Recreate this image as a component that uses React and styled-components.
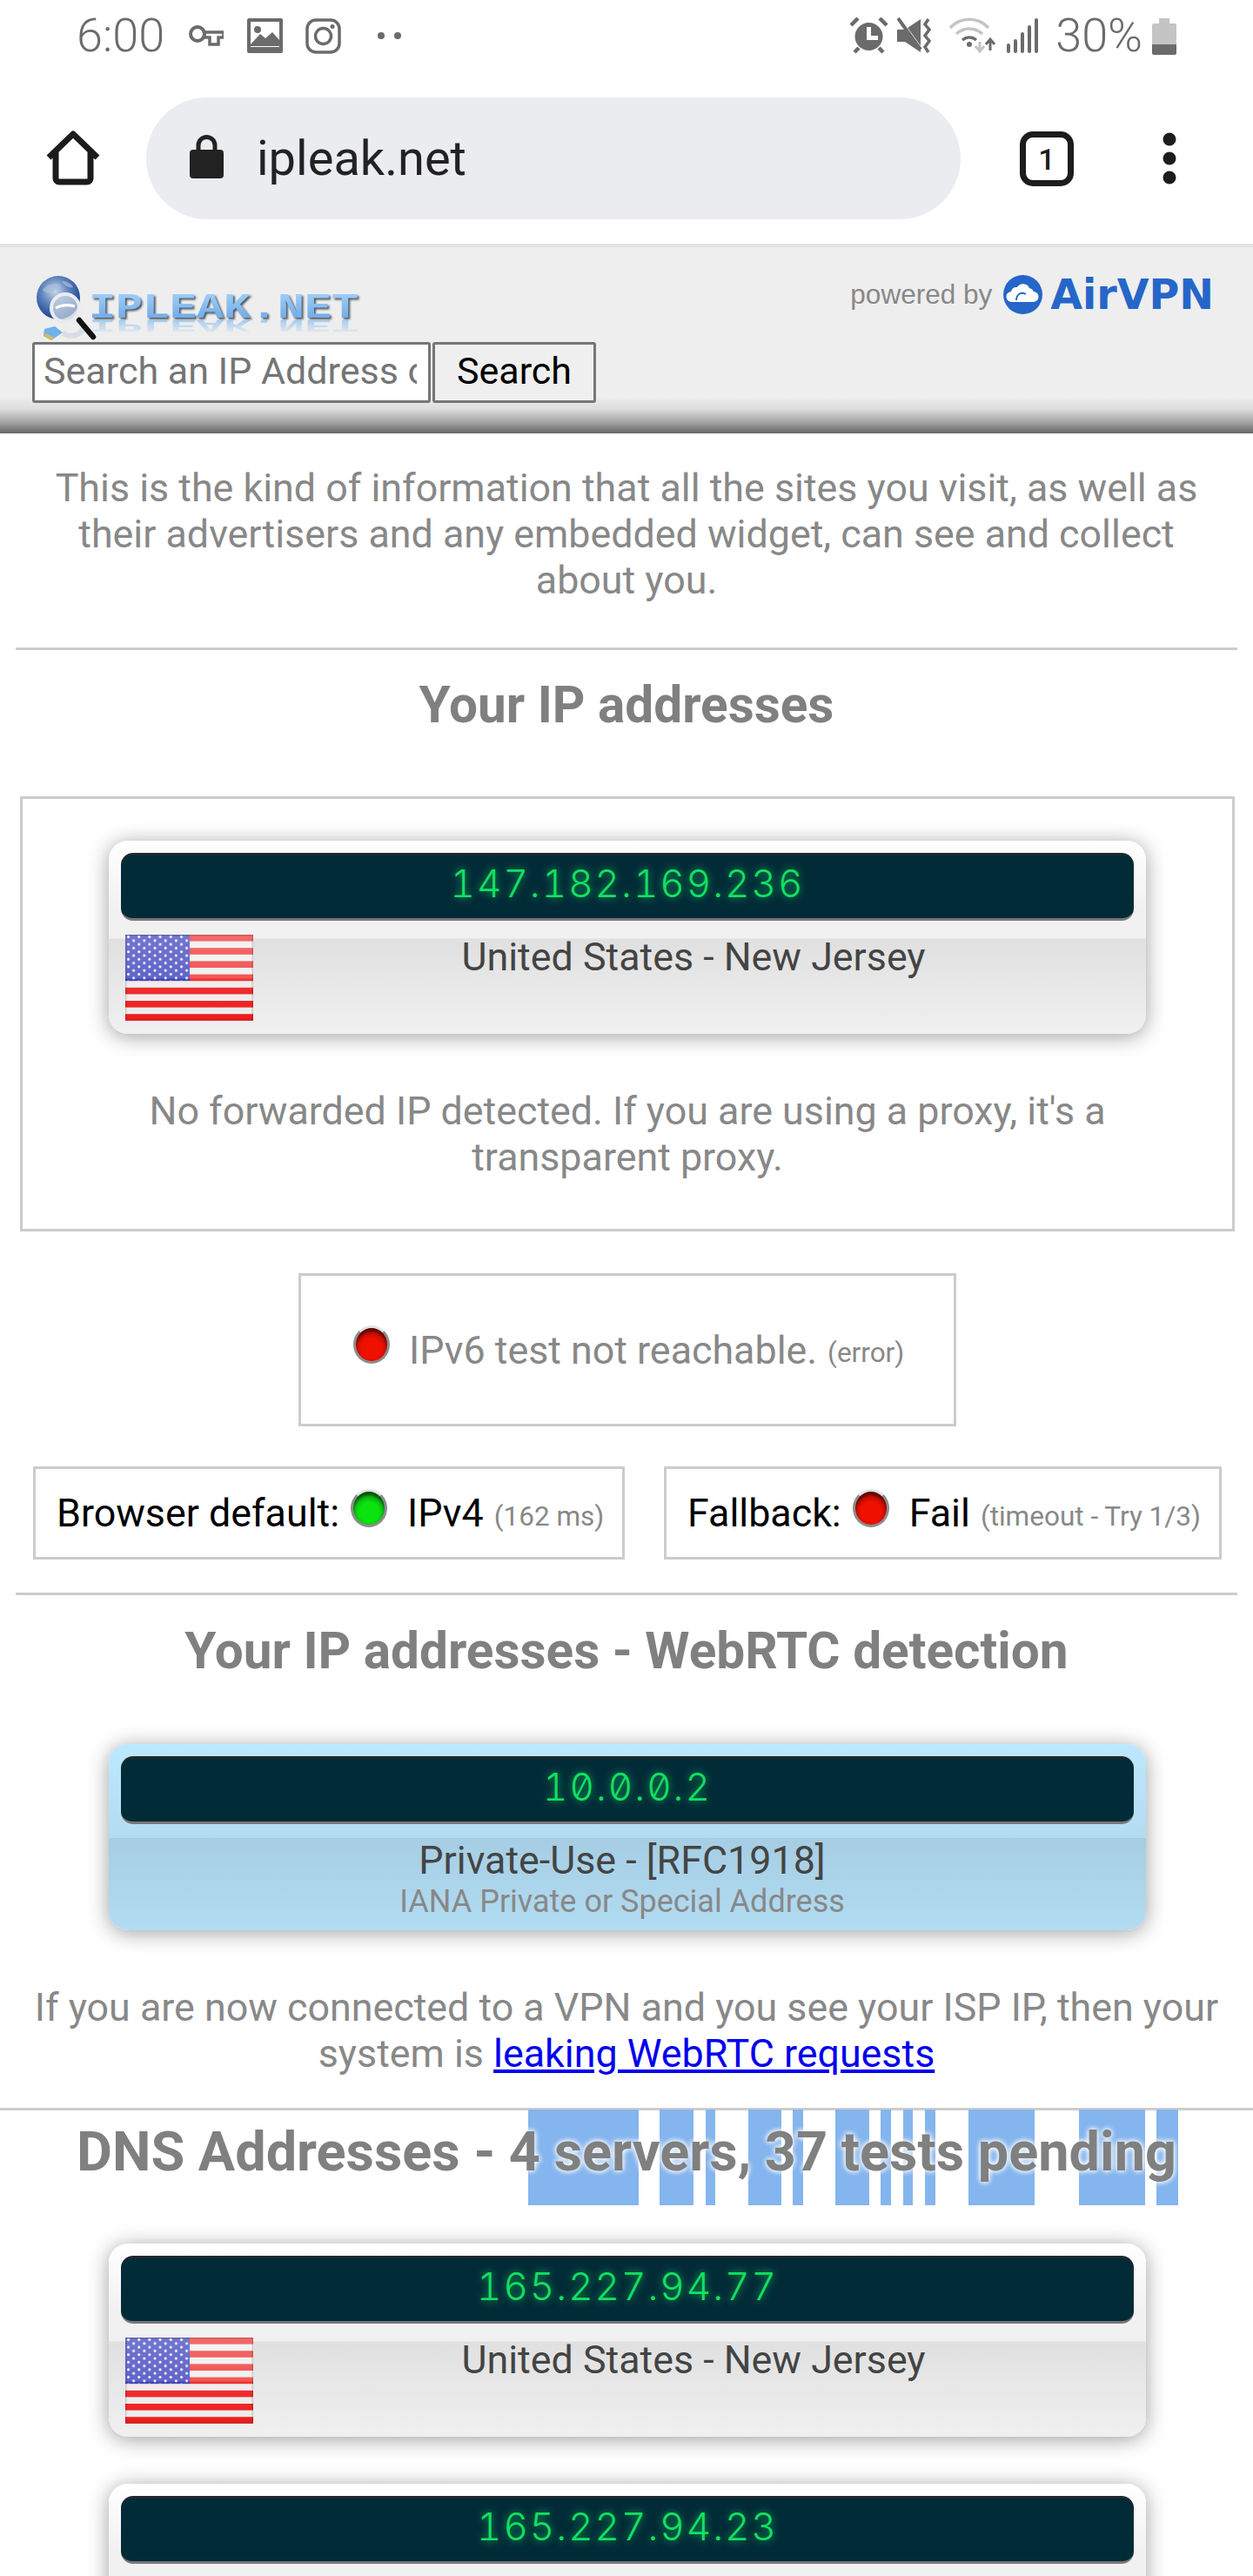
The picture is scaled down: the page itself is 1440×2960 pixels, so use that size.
import React from "react";
import styled, { createGlobalStyle } from "styled-components";

const GlobalStyle = createGlobalStyle`
  html, body {
    margin: 0;
    padding: 0;
    background: #fff;
  }
  body {
    font-family: Roboto, "Liberation Sans", sans-serif;
  }
`;

const Page = styled.div`
  width: 1440px;
  height: 2960px;
  overflow: hidden;
  background: #fff;
`;

/* android status bar */
const StatusBar = styled.div`
  height: 80px;
  display: flex;
  align-items: center;
  justify-content: space-between;
  padding: 2px 88px 0 88px;
  color: #6b6b6b;
  box-sizing: border-box;
`;

const StatusGroup = styled.div`
  display: flex;
  align-items: center;
`;

const StatusText = styled.span`
  font-size: 54px;
  font-weight: 300;
  line-height: 78px;
  margin-left: ${(p) => p.$gap || 0}px;
`;

const StatusIcon = styled.svg`
  display: block;
  flex: none;
  margin-left: ${(p) => p.$gap || 0}px;
`;

/* chrome toolbar */
const Toolbar = styled.div`
  height: 200px;
  display: flex;
  align-items: flex-start;
  position: relative;
`;

const HomeIcon = styled.svg`
  flex: none;
  margin: 70px 0 0 53px;
`;

const UrlPill = styled.div`
  width: 936px;
  height: 140px;
  margin: 32px 0 0 53px;
  border-radius: 70px;
  background: #ebecf0;
  display: flex;
  align-items: center;
  flex: none;
`;

const LockIcon = styled.svg`
  margin-left: 50px;
  margin-top: -4px;
  flex: none;
`;

const UrlText = styled.span`
  margin-left: 38px;
  font-size: 56px;
  color: #222;
`;

const TabCount = styled.div`
  flex: none;
  box-sizing: border-box;
  width: 62px;
  height: 63px;
  margin: 71px 0 0 68px;
  border: 7px solid #1c1c1c;
  border-radius: 15px;
  display: flex;
  align-items: center;
  justify-content: center;
  font-size: 34px;
  font-weight: 500;
  color: #1c1c1c;
`;

const MenuDots = styled.svg`
  flex: none;
  margin: 72px 0 0 102px;
`;

/* ipleak header */
const Header = styled.header`
  height: 218px;
  box-sizing: border-box;
  border-top: 4px solid #e2e4e2;
  background: linear-gradient(to bottom, #eeeeee 0, #eeeeee 172px, #dddddd 186px, #a0a0a0 202px, #666666 214px);
  display: flex;
  justify-content: space-between;
  padding: 29px 45px 0 37px;
`;

const Brand = styled.div`
  display: flex;
  flex-direction: column;
`;

const LogoSvg = styled.svg`
  display: block;
`;

const SearchForm = styled.form`
  display: flex;
  gap: 2px;
`;

const SearchInput = styled.input`
  box-sizing: border-box;
  width: 458px;
  height: 70px;
  border: 3px solid #767676;
  border-radius: 3px;
  padding: 0 13px 5px 10px;
  background: #fff;
  font: 400 43px Roboto, sans-serif;
  outline: none;
  &::placeholder {
    color: #757575;
    opacity: 1;
  }
`;

const SearchButton = styled.button`
  box-sizing: border-box;
  width: 188px;
  height: 70px;
  border: 3px solid #767676;
  border-radius: 3px;
  background: #efefef;
  font: 400 43px Roboto, sans-serif;
  color: #000;
  padding: 0 0 5px;
`;

const Powered = styled.div`
  display: flex;
  align-items: center;
  height: 46px;
  margin-top: 2px;
`;

const PoweredLabel = styled.span`
  font: 400 31.5px "Liberation Sans", sans-serif;
  color: #888;
  margin-right: 13px;
`;

const AirVpnName = styled.span`
  font: 700 47.5px "DejaVu Sans", sans-serif;
  color: #2566c8;
  margin-left: 9px;
`;

/* page content */
const Paragraph = styled.p`
  margin: ${(p) => p.$margin || "0 auto"};
  max-width: ${(p) => p.$max || 1350}px;
  font-size: 44.8px;
  line-height: 53px;
  text-align: center;
  color: #888;
`;

const Rule = styled.hr`
  border: 0;
  height: 3px;
  background: #ccc;
  margin: ${(p) => p.$margin};
`;

const Heading = styled.h2`
  margin: ${(p) => p.$margin};
  font-size: 58.5px;
  line-height: 64px;
  font-weight: 700;
  text-align: center;
  color: #808080;
`;

const stripes = [
  [607, 734], [758, 797], [811, 822], [860, 898], [911, 923], [960, 999],
  [1012, 1024], [1038, 1049], [1063, 1075], [1113, 1189], [1240, 1278],
  [1278, 1316], [1329, 1354],
];

const stripeGradient = () => {
  const stops = stripes.flatMap(([a, b]) => [
    `transparent ${a}px`,
    `#85b5ee ${a}px`,
    `#85b5ee ${b}px`,
    `transparent ${b}px`,
  ]);
  return `linear-gradient(to right, ${stops.join(", ")})`;
};

const DnsSection = styled.div`
  height: 110px;
  margin-top: -1px;
  background: ${stripeGradient()};
`;

const DnsHeading = styled.h2`
  margin: 0;
  padding-top: 17px;
  font-size: 63px;
  line-height: 64px;
  font-weight: 700;
  text-align: center;
  color: #808080;
  text-shadow: 0 0 6px #fff, 0 0 6px #fff;
`;

const OutlineBox = styled.div`
  box-sizing: border-box;
  border: 3px solid #ccc;
  margin: ${(p) => p.$margin || 0};
`;

const MainBox = styled(OutlineBox)`
  width: 1396px;
  height: 500px;
  padding-top: 48px;
`;

const Ipv6Box = styled(OutlineBox)`
  width: 756px;
  height: 176px;
  display: flex;
  align-items: center;
  padding: 0 0 0 60px;
  color: #888;
  font-size: 44.8px;
`;

const TestRow = styled.div`
  display: flex;
  gap: 45px;
  margin: 46px 0 0 38px;
`;

const TestBox = styled(OutlineBox)`
  width: ${(p) => p.$width}px;
  height: 107px;
  display: flex;
  align-items: center;
  padding-left: 24px;
  color: #000;
  font-size: 44.8px;
  white-space: nowrap;
`;

const Small = styled.span`
  font-size: 31.5px;
  color: #888;
  margin-left: 12px;
  padding-top: 7px;
`;

const Led = styled.span`
  flex: none;
  box-sizing: border-box;
  width: 42px;
  height: 44px;
  border-radius: 50%;
  margin: ${(p) => p.$margin};
  border: 3px solid #8d8d8d;
  border-top-color: #e2e2e2;
  background: radial-gradient(circle at 50% 62%, ${(p) => p.$light} 0, ${(p) => p.$light} 38%, ${(p) => p.$dark} 100%);
  box-shadow: inset 0 4px 3px rgba(0, 0, 0, 0.45);
`;

const Card = styled.div`
  box-sizing: border-box;
  width: 1192px;
  height: ${(p) => p.$height}px;
  margin: ${(p) => p.$margin || "0 0 0 99px"};
  padding: 14px 14px 0;
  border-radius: 22px;
  box-shadow: 0 3px 24px rgba(0, 0, 0, 0.38);
  background: ${(p) =>
    p.$blue
      ? "linear-gradient(to bottom, #bce8ff 0, #b3dcf2 108px, #a6cde2 108px, #a9d2e8 140px, #b2dcf2 100%)"
      : "linear-gradient(to bottom, #ffffff 0, #f1f1f1 80px, #f1f1f1 112px, #e0e0e0 113px, #f0f0f0 100%)"};
`;

const Display = styled.div`
  box-sizing: border-box;
  height: 78px;
  border-radius: 14px;
  background: #022b38;
  border-top: 3px solid #20292d;
  border-bottom: 3px solid #777;
  text-align: center;
  font-family: Inter, Roboto, sans-serif;
  font-weight: 300;
  font-size: 44px;
  line-height: 64px;
  letter-spacing: 2px;
  font-feature-settings: "zero", "tnum";
  color: #12e061;
  text-shadow: 0 0 10px rgba(18, 224, 97, 0.75);
`;

const InfoRow = styled.div`
  display: flex;
  align-items: flex-start;
  margin-top: 16px;
  padding-left: 5px;
`;

const FlagSvg = styled.svg`
  display: block;
  flex: none;
`;

const Place = styled.div`
  flex: 1;
  margin-top: -1px;
  font-size: 44.8px;
  line-height: 53px;
  text-align: center;
  color: #444;
`;

const PrivateInfo = styled.div`
  margin-right: 12px;
  padding-top: 15px;
  text-align: center;
`;

const PrivateName = styled.div`
  font-size: 44.8px;
  line-height: 53px;
  color: #444;
`;

const PrivateNote = styled.div`
  font-size: 36px;
  line-height: 42px;
  color: #888;
`;

const Link = styled.a`
  color: #0000ee;
  text-decoration: underline;
`;

const UsFlag = () => (
  <FlagSvg width="147" height="99" viewBox="0 0 147 99">
    <defs>
      <pattern id="stars" width="12.2" height="8.6" patternUnits="userSpaceOnUse">
        <circle cx="3.5" cy="2.5" r="1.5" fill="#fff" />
        <circle cx="9.6" cy="6.8" r="1.5" fill="#fff" />
      </pattern>
      <linearGradient id="gloss" x1="0" y1="0" x2="0" y2="1">
        <stop offset="0" stopColor="#fff" stopOpacity="0.34" />
        <stop offset="0.5" stopColor="#fff" stopOpacity="0.26" />
        <stop offset="0.52" stopColor="#fff" stopOpacity="0.1" />
        <stop offset="1" stopColor="#fff" stopOpacity="0" />
      </linearGradient>
    </defs>
    <rect width="147" height="99" fill="#ececec" />
    {Array.from({ length: 7 }, (_, i) => (
      <rect key={i} y={i * 15.2} width="147" height="7.6" fill="#ee1c1c" />
    ))}
    <rect width="74" height="53" fill="#2a2fb5" />
    <rect width="74" height="53" fill="url(#stars)" />
    <rect width="147" height="99" fill="url(#gloss)" />
    <rect x="0.75" y="0.75" width="145.5" height="97.5" fill="none" stroke="#000" strokeOpacity="0.15" strokeWidth="1.5" />
  </FlagSvg>
);

const IpCard = ({ ip, margin }) => (
  <Card $height={222} $margin={margin}>
    <Display>{ip}</Display>
    <InfoRow>
      <UsFlag />
      <Place>United States - New Jersey</Place>
    </InfoRow>
  </Card>
);

const Logo = () => (
  <LogoSvg width="390" height="80" viewBox="0 0 390 80">
    <defs>
      <radialGradient id="globe" cx="0.42" cy="0.35" r="0.7">
        <stop offset="0" stopColor="#c8d8ea" />
        <stop offset="0.45" stopColor="#5f84bd" />
        <stop offset="1" stopColor="#12338a" />
      </radialGradient>
      <linearGradient id="logoText" x1="0" y1="0" x2="0" y2="1">
        <stop offset="0" stopColor="#a9d6fb" />
        <stop offset="1" stopColor="#5f9de0" />
      </linearGradient>
      <linearGradient id="logoFade" x1="0" y1="0" x2="0" y2="1">
        <stop offset="0" stopColor="#6fb0ee" stopOpacity="0" />
        <stop offset="1" stopColor="#6fb0ee" stopOpacity="0.75" />
      </linearGradient>
    </defs>
    <circle cx="30" cy="29" r="25" fill="url(#globe)" />
    <path d="M12 20c6-7 16-8 20-6 3 3-2 7-7 7-2 4-9 4-13-1zM34 10c5 0 10 2 13 7-4 1-9-1-13-7z" fill="#a8bfd8" opacity="0.7" />
    <path d="M35 70c12 6 22 2 25-9" fill="none" stroke="#d8dde2" strokeWidth="6" />
    <line x1="54" y1="55" x2="70" y2="74" stroke="#111" strokeWidth="6.5" strokeLinecap="round" />
    <circle cx="38" cy="41" r="16" fill="#cfd9e6" fillOpacity="0.72" stroke="#e9ecef" strokeWidth="4" />
    <path d="M27 41c7-4 15-4 22-2" fill="none" stroke="#fff" strokeWidth="3" />
    <path d="M14 65l12-3 9 7-13 9-9-5z" fill="#6fb2ea" />
    <path d="M13 73l9 5 3-3-9-5z" fill="#d8b95a" />
    <text
      x="65"
      y="52"
      textLength="310"
      lengthAdjust="spacingAndGlyphs"
      fontFamily="Liberation Mono, monospace"
      fontWeight="700"
      fontSize="41"
      fill="url(#logoText)"
      style={{ filter: "drop-shadow(2px 2px 1px #4c5866)" }}
    >
      IPLEAK.NET
    </text>
    <text
      transform="translate(0 81) scale(1 -0.5)"
      x="65"
      y="52"
      textLength="310"
      lengthAdjust="spacingAndGlyphs"
      fontFamily="Liberation Mono, monospace"
      fontWeight="700"
      fontSize="41"
      fill="url(#logoFade)"
      aria-hidden="true"
    >
      IPLEAK.NET
    </text>
  </LogoSvg>
);

export default function App() {
  return (
    <Page>
      <GlobalStyle />
      <StatusBar>
        <StatusGroup>
          <StatusText>6:00</StatusText>
          <StatusIcon $gap={28} width="40" height="24" viewBox="0 0 40 24">
            <circle cx="10" cy="10" r="8" fill="none" stroke="#6b6b6b" strokeWidth="4" />
            <path d="M18 8h22v6h-6v8h-10v-8h-6z" fill="none" stroke="#6b6b6b" strokeWidth="3.5" />
          </StatusIcon>
          <StatusIcon $gap={27} width="41" height="40" viewBox="0 0 41 40">
            <rect width="41" height="40" rx="2" fill="#6b6b6b" />
            <rect x="4" y="4" width="33" height="29" fill="#fff" />
            <circle cx="12" cy="13" r="4" fill="#6b6b6b" />
            <path d="M4 30l11-12 6 5 8-7 8 9v7H4z" fill="#6b6b6b" />
          </StatusIcon>
          <StatusIcon $gap={26} width="41" height="41" viewBox="0 0 41 41">
            <rect x="2" y="2" width="37" height="37" rx="10" fill="none" stroke="#6b6b6b" strokeWidth="3.5" />
            <circle cx="20.5" cy="20.5" r="9" fill="none" stroke="#6b6b6b" strokeWidth="3.5" />
            <circle cx="31" cy="9.5" r="2.5" fill="#6b6b6b" />
          </StatusIcon>
          <StatusIcon $gap={42} width="27" height="8" viewBox="0 0 27 8">
            <circle cx="4" cy="4" r="4" fill="#6b6b6b" />
            <circle cx="23" cy="4" r="4" fill="#6b6b6b" />
          </StatusIcon>
        </StatusGroup>
        <StatusGroup>
          <StatusIcon width="45" height="42" viewBox="0 0 45 42">
            <circle cx="22.5" cy="22" r="16" fill="#6b6b6b" />
            <path d="M20 11h5v10h8v5H20z" fill="#fff" />
            <path d="M2 9L10 1M43 9L35 1M6 40l5-5M39 40l-5-5" stroke="#6b6b6b" strokeWidth="4.5" />
          </StatusIcon>
          <StatusIcon $gap={10} width="42" height="42" viewBox="0 0 42 42">
            <path d="M0 14h9L27 2v38L9 28H0z" fill="#6b6b6b" />
            <path d="M3 2l26 36" stroke="#fff" strokeWidth="3" />
            <path d="M1 1l26 36" stroke="#6b6b6b" strokeWidth="4" />
            <path d="M36 2l-4 6 5 6-5 7 5 6-5 7 4 6" fill="none" stroke="#6b6b6b" strokeWidth="3.5" />
          </StatusIcon>
          <StatusIcon $gap={17} width="55" height="42" viewBox="0 0 55 42">
            <path d="M2 12c12-13 32-13 44 0" fill="none" stroke="#c4c4c4" strokeWidth="3.5" />
            <path d="M9 19c9-8 21-8 30 0" fill="none" stroke="#c4c4c4" strokeWidth="3.5" />
            <path d="M16 26c5-4 11-4 16 0" fill="none" stroke="#6b6b6b" strokeWidth="3.5" />
            <circle cx="24" cy="31" r="3" fill="#6b6b6b" />
            <path d="M36 28v10m-5-5l5 6 5-6" fill="none" stroke="#c4c4c4" strokeWidth="3" />
            <path d="M48 38V26m-5 5l5-6 5 6" fill="none" stroke="#6b6b6b" strokeWidth="3" />
          </StatusIcon>
          <StatusIcon $gap={12} width="36" height="40" viewBox="0 0 36 40">
            <rect x="0" y="29" width="4" height="11" rx="2" fill="#6b6b6b" />
            <rect x="8" y="24" width="4" height="16" rx="2" fill="#6b6b6b" />
            <rect x="16" y="16" width="4" height="24" rx="2" fill="#6b6b6b" />
            <rect x="24" y="8" width="4" height="32" rx="2" fill="#6b6b6b" />
            <rect x="32" y="0" width="4" height="40" rx="2" fill="#6b6b6b" />
          </StatusIcon>
          <StatusText $gap={20}>30%</StatusText>
          <StatusIcon $gap={11} width="28" height="43" viewBox="0 0 28 43">
            <path d="M8 0h12v6h6a2 2 0 0 1 2 2v31a2 2 0 0 1-2 2H2a2 2 0 0 1-2-2V8a2 2 0 0 1 2-2h6z" fill="#c4c4c4" transform="translate(0 1)" />
            <path d="M0 31h28v10a2 2 0 0 1-2 2H2a2 2 0 0 1-2-2z" fill="#6b6b6b" />
          </StatusIcon>
        </StatusGroup>
      </StatusBar>

      <Toolbar>
        <HomeIcon width="62" height="63" viewBox="0 0 62 63">
          <path d="M3 31L31 4l28 27M11 24v31a4 4 0 0 0 4 4h32a4 4 0 0 0 4-4V24" fill="none" stroke="#1c1c1c" strokeWidth="7" strokeLinejoin="round" />
        </HomeIcon>
        <UrlPill>
          <LockIcon width="39" height="50" viewBox="0 0 39 50">
            <path d="M10 20v-8a9.500 9.500 0 0 1 19 0v8" fill="none" stroke="#222" strokeWidth="5" />
            <rect y="17" width="39" height="33" rx="4" fill="#222" />
          </LockIcon>
          <UrlText>ipleak.net</UrlText>
        </UrlPill>
        <TabCount>1</TabCount>
        <MenuDots width="16" height="60" viewBox="0 0 16 60">
          <circle cx="8" cy="8" r="7.5" fill="#1c1c1c" />
          <circle cx="8" cy="30" r="7.5" fill="#1c1c1c" />
          <circle cx="8" cy="52" r="7.5" fill="#1c1c1c" />
        </MenuDots>
      </Toolbar>

      <Header>
        <Brand>
          <Logo />
          <SearchForm>
            <SearchInput placeholder="Search an IP Address or Domain" />
            <SearchButton type="button">Search</SearchButton>
          </SearchForm>
        </Brand>
        <Powered>
          <PoweredLabel>powered by</PoweredLabel>
          <svg width="45" height="45" viewBox="0 0 45 45">
            <circle cx="22.500" cy="22.500" r="22.500" fill="#2566c8" />
            <path d="M10 31a6 6 0 0 1-1-12 6 6 0 0 1 7-5 8 8 0 0 1 14 1 7 7 0 0 1 5 4 6 6 0 0 1-1 12z" fill="#fff" />
            <path d="M15 29c0-7 6-10 11-7" fill="none" stroke="#2566c8" strokeWidth="2" />
          </svg>
          <AirVpnName>AirVPN</AirVpnName>
        </Powered>
      </Header>

      <Paragraph $margin="36px auto 0">
        This is the kind of information that all the sites you visit, as well as their advertisers and any embedded widget, can see and collect about you.
      </Paragraph>
      <Rule $margin="51px 18px 0" />
      <Heading $margin="31px 0 0">Your IP addresses</Heading>

      <MainBox $margin="73px 0 0 23px">
        <IpCard ip="147.182.169.236" />
        <Paragraph $max={1200} $margin="62px auto 0">
          No forwarded IP detected. If you are using a proxy, it's a transparent proxy.
        </Paragraph>
      </MainBox>

      <Ipv6Box $margin="48px 0 0 343px">
        <Led $light="#f01000" $dark="#6e0a06" $margin="0 22px 12px 0" />
        IPv6 test not reachable.
        <Small>(error)</Small>
      </Ipv6Box>

      <TestRow>
        <TestBox $width={680}>
          Browser default:
          <Led $light="#0be310" $dark="#06570a" $margin="0 23px 12px 13px" />
          IPv4
          <Small>(162 ms)</Small>
        </TestBox>
        <TestBox $width={641}>
          Fallback:
          <Led $light="#f01000" $dark="#6e0a06" $margin="0 23px 12px 13px" />
          Fail
          <Small>(timeout - Try 1/3)</Small>
        </TestBox>
      </TestRow>

      <Rule $margin="38px 18px 0" />
      <Heading $margin="32px 0 0">Your IP addresses - WebRTC detection</Heading>

      <Card $blue $height={214} $margin="75px 0 0 125px">
        <Display>10.0.0.2</Display>
        <PrivateInfo>
          <PrivateName>Private-Use - [RFC1918]</PrivateName>
          <PrivateNote>IANA Private or Special Address</PrivateNote>
        </PrivateInfo>
      </Card>

      <Paragraph $max={1400} $margin="62px auto 0">
        If you are now connected to a VPN and you see your ISP IP, then your system is <Link href="#">leaking WebRTC requests</Link>
      </Paragraph>

      <Rule $margin="36px 0 0" />
      <DnsSection>
        <DnsHeading>DNS Addresses - 4 servers, 37 tests pending</DnsHeading>
      </DnsSection>

      <IpCard ip="165.227.94.77" margin="44px 0 0 125px" />
      <IpCard ip="165.227.94.23" margin="54px 0 0 125px" />
    </Page>
  );
}
